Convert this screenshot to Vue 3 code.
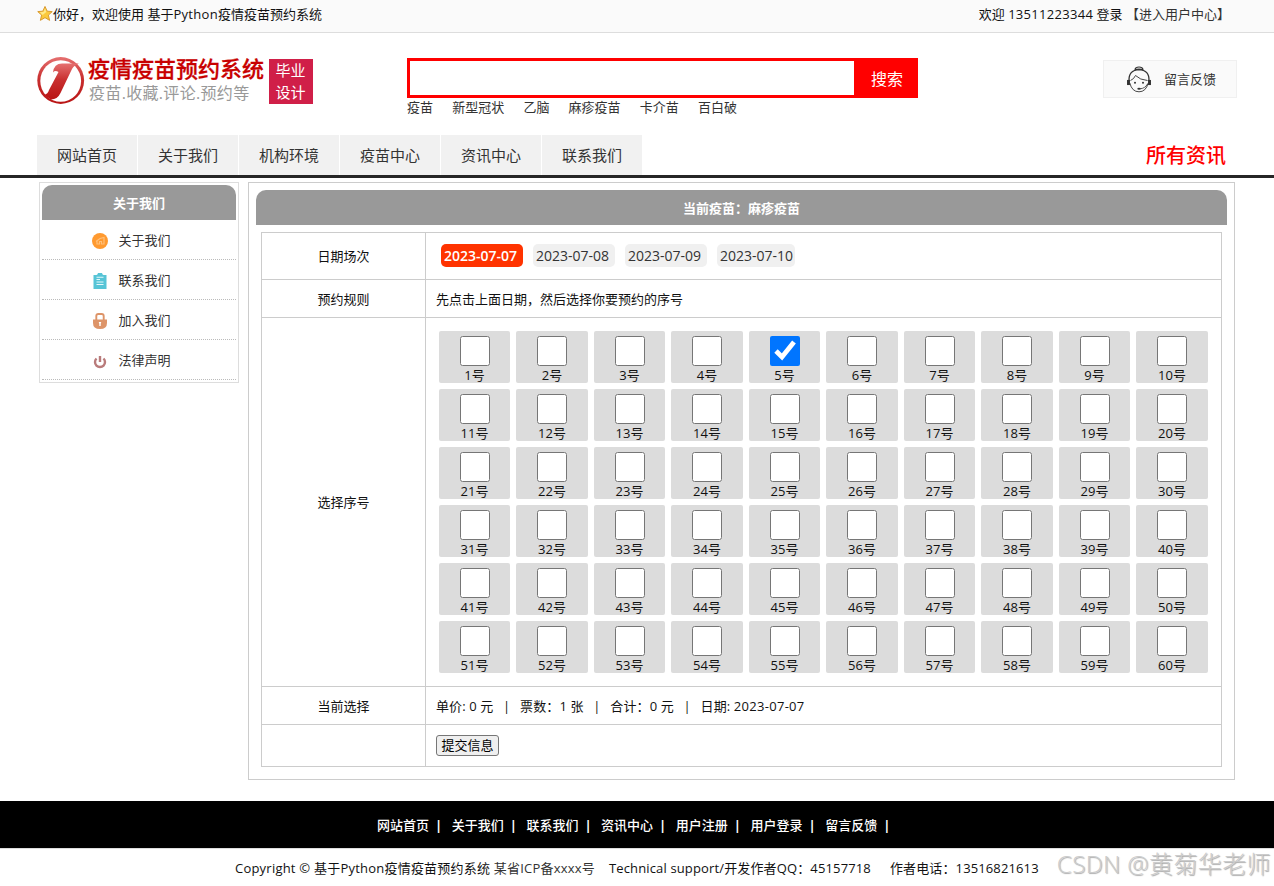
<template>
  <div class="page">
    <div class="top-bar">
      <div class="top-left">
        <svg class="star" viewBox="0 0 17 17">
          <path d="M8.5 1 L10.8 6 L16.2 6.5 L12.1 10.2 L13.4 15.8 L8.5 12.9 L3.6 15.8 L4.9 10.2 L0.8 6.5 L6.2 6 Z" fill="#fbc93c" stroke="#d6952c" stroke-width="1" stroke-linejoin="round" />
          <path d="M8.5 3 L9.9 7 L6 10 L3 7.2 L7 6.8 Z" fill="#ffe98a" />
        </svg>
        <span>你好，欢迎使用 基于<i class="num">Python</i>疫情疫苗预约系统</span>
      </div>
      <div class="top-right">欢迎 <i class="num">13511223344</i> 登录 <a href="#">【进入用户中心】</a></div>
    </div>

    <div class="header">
      <div class="logo">
        <svg class="logo-icon" viewBox="0 0 48 48">
          <defs>
            <linearGradient id="ring" x1="0" y1="0" x2="0" y2="1">
              <stop offset="0" stop-color="#e57070" />
              <stop offset="0.45" stop-color="#c93030" />
              <stop offset="1" stop-color="#b91414" />
            </linearGradient>
          </defs>
          <circle cx="23.7" cy="23.5" r="23.4" fill="url(#ring)" />
          <ellipse cx="23.7" cy="24" rx="20.4" ry="20.8" fill="#fff" />
          <path d="M16 15.5 Q17 6.5 25 6.5 L42 6.5 Q37 8 35 12 L23.5 36 Q20.5 42.5 14 42.5 L7 38 Q11 37 12 33 L21.5 15 Q18 13 16 15.5 Z" fill="url(#ring)" />
        </svg>
        <div class="logo-text">
          <div class="logo-title">疫情疫苗预约系统</div>
          <div class="logo-sub">疫苗.收藏.评论.预约等</div>
        </div>
        <div class="logo-badge">毕业<br />设计</div>
      </div>
      <div class="search">
        <div class="search-box">
          <input v-model="keyword" type="text" />
          <button>搜索</button>
        </div>
        <div class="keywords">
          <a v-for="item in keywords" :key="item" href="#">{{ item }}</a>
        </div>
      </div>
      <a class="feedback" href="#">
        <svg viewBox="0 0 24 27" fill="none" stroke="#333" stroke-width="1.1">
          <path d="M8 3.4 Q8.5 1 12 1 Q15.5 1 16 3.4 M7.5 4 Q12 2.2 16.5 4" />
          <path d="M2 15 Q1.5 4 12 3.6 Q22.5 4 22 15" stroke-width="1.3" />
          <path d="M2.8 17 Q5 25.8 12 25.8 Q19 25.8 21.2 17" stroke-width="0.9" />
          <path d="M3.5 14.5 Q7 13 8.5 9.5 Q13 14 20.5 14.5" stroke-width="0.9" />
          <path d="M20.5 18 Q18 22.5 13 22.8" stroke-width="0.8" />
          <rect x="0.6" y="14.5" width="1.8" height="4" fill="#333" />
          <rect x="21.6" y="14.5" width="1.8" height="4" fill="#333" />
          <circle cx="8" cy="16.8" r="1" fill="#333" stroke="none" />
          <circle cx="16" cy="16.8" r="1" fill="#333" stroke="none" />
          <ellipse cx="12" cy="22.8" rx="1.7" ry="1" fill="#333" stroke="none" />
        </svg>
        <span>留言反馈</span>
      </a>
    </div>

    <div class="nav">
      <a v-for="item in navs" :key="item" class="nav-item" href="#">{{ item }}</a>
      <span class="nav-news">所有资讯</span>
    </div>

    <div class="content">
      <div class="side">
        <div class="title">关于我们</div>
        <a v-for="item in sides" :key="item.name" class="side-item" href="#">
          <svg viewBox="0 0 16 16">
            <template v-if="item.icon === 'home'">
              <circle cx="8" cy="8" r="8" fill="#ff9a30" />
              <path d="M4 8.5 L8 5.5 L12 4.5 V11 H9.5 V8.5 H7.5 V11 H5 V8" fill="none" stroke="#ffc07a" stroke-width="1.2" />
            </template>
            <template v-else-if="item.icon === 'list'">
              <path d="M1.5 2 H4.5 Q5.5 2 6 0 H10 Q10.5 2 11.5 2 H14.5 V16 H1.5 Z" fill="#56c4d6" />
              <path d="M4.5 4.3 H11.5 M4.5 6.5 H8 M4.5 9 H11.5 M4.5 11.5 H11.5" stroke="#e4f8fb" stroke-width="1.1" />
            </template>
            <template v-else-if="item.icon === 'lock'">
              <path d="M4.3 8 V3 Q4.3 1 6.3 1 H9.7 Q11.7 1 11.7 3 V8" fill="none" stroke="#dd9468" stroke-width="1.9" />
              <path d="M1 6.5 H15 V10 Q15 16 8 16 Q1 16 1 10 Z" fill="#dd9468" />
              <path d="M6.7 9 H9.3 L8.7 10.8 V13 H7.3 V10.8 Z" fill="#fff" />
            </template>
            <template v-else>
              <path d="M4.5 5.5 A5 5 0 1 0 11.5 5.5" fill="none" stroke="#b97b7b" stroke-width="2.4" />
              <path d="M8 3 V9" stroke="#b97b7b" stroke-width="2.4" />
            </template>
          </svg>
          <span>{{ item.name }}</span>
        </a>
      </div>

      <div class="main">
        <div class="title">当前疫苗：麻疹疫苗</div>
        <table class="book">
          <tbody>
            <tr class="row-date">
              <td class="label">日期场次</td>
              <td>
                <div class="dates">
                  <a
                    v-for="d in dates"
                    :key="d"
                    :class="{ active: d === currentDate }"
                    href="#"
                    @click.prevent="currentDate = d"
                  >{{ d }}</a>
                </div>
              </td>
            </tr>
            <tr class="row-text">
              <td class="label">预约规则</td>
              <td>先点击上面日期，然后选择你要预约的序号</td>
            </tr>
            <tr class="row-seat">
              <td class="label">选择序号</td>
              <td>
                <div class="seats">
                  <label v-for="n in 60" :key="n" class="seat">
                    <input v-model="selected" type="checkbox" :value="n" />
                    <span>{{ n }}号</span>
                  </label>
                </div>
              </td>
            </tr>
            <tr class="row-text">
              <td class="label">当前选择</td>
              <td>
                <div class="summary">
                  <span>单价: {{ price }} 元</span><b>|</b>
                  <span>票数：{{ selected.length }} 张</span><b>|</b>
                  <span>合计：{{ price * selected.length }} 元</span><b>|</b>
                  <span>日期: <i class="num">{{ currentDate }}</i></span>
                </div>
              </td>
            </tr>
            <tr class="row-submit">
              <td class="label"></td>
              <td><button class="submit">提交信息</button></td>
            </tr>
          </tbody>
        </table>
      </div>
    </div>

    <div class="foot-nav">
      <span v-for="item in footers" :key="item"><a href="#">{{ item }}</a><b>|</b></span>
    </div>
    <div class="copyright">
      <span class="c1">Copyright © 基于Python疫情疫苗预约系统 <a href="#">某省ICP备xxxx号</a></span>
      <span class="c2">Technical support/开发作者QQ：45157718</span>
      <span class="c3">作者电话：13516821613</span>
    </div>
    <div class="watermark">CSDN @黄菊华老师</div>
  </div>
</template>

<script setup>
import { ref } from 'vue'

const keyword = ref('')
const keywords = ['疫苗', '新型冠状', '乙脑', '麻疹疫苗', '卡介苗', '百白破']
const navs = ['网站首页', '关于我们', '机构环境', '疫苗中心', '资讯中心', '联系我们']
const sides = [
  { name: '关于我们', icon: 'home' },
  { name: '联系我们', icon: 'list' },
  { name: '加入我们', icon: 'lock' },
  { name: '法律声明', icon: 'power' }
]
const dates = ['2023-07-07', '2023-07-08', '2023-07-09', '2023-07-10']
const footers = ['网站首页', '关于我们', '联系我们', '资讯中心', '用户注册', '用户登录', '留言反馈']

const currentDate = ref('2023-07-07')
const selected = ref([5])
const price = ref(0)
</script>

<style>
body {
  margin: 0;
  background: #fff;
}
</style>

<style scoped>
.page {
  position: relative;
  height: 886px;
  overflow: hidden;
  font-family: "Open Sans", "Noto Sans CJK SC", sans-serif;
  font-size: 13px;
  line-height: 20px;
  color: #111;
}

.page * {
  box-sizing: border-box;
}

a {
  color: #333;
  text-decoration: none;
}

i {
  font-style: normal;
}

.num {
  letter-spacing: 0.3px;
}

input,
button {
  font-family: inherit;
}

.top-bar {
  display: flex;
  justify-content: space-between;
  height: 33px;
  padding: 4px 44px 0 37px;
  background: #fafafa;
  border-bottom: 1px solid #ddd;
}

.top-left {
  display: flex;
}

.star {
  width: 16px;
  height: 17px;
  margin-top: 1px;
}

.header {
  display: flex;
  height: 102px;
  padding-left: 37px;
}

.logo {
  display: flex;
  width: 370px;
  padding-top: 24px;
}

.logo-icon {
  width: 48px;
  height: 48px;
}

.logo-text {
  width: 181px;
  margin-left: 3px;
  white-space: nowrap;
}

.logo-title {
  height: 24px;
  line-height: 23px;
  font-size: 22px;
  font-weight: 500;
  color: #c80000;
  -webkit-text-stroke: 0.3px #c80000;
}

.logo-sub {
  padding-left: 1px;
  line-height: 24px;
  font-size: 16px;
  letter-spacing: 0.32px;
  color: #999;
}

.logo-badge {
  width: 44px;
  height: 45px;
  margin-top: 2px;
  padding-right: 1px;
  background: #d01f48;
  color: #fff;
  font-size: 15px;
  line-height: 22px;
  text-align: center;
}

.search {
  width: 511px;
  padding-top: 25px;
}

.search-box {
  display: flex;
  height: 40px;
}

.search-box input {
  width: 447px;
  border: 3px solid #f00;
  border-right: 0;
  outline: none;
}

.search-box button {
  width: 64px;
  border: 0;
  padding: 0 0 0 2px;
  background: #f00;
  color: #fff;
  font-size: 16px;
}

.keywords {
  display: flex;
  gap: 19.2px;
  line-height: 18px;
}

.feedback {
  display: flex;
  align-items: center;
  width: 134px;
  height: 38px;
  margin: 27px 0 0 185px;
  padding-left: 23px;
  background: #fafafa;
  border: 1px solid #f0f0f0;
}

.feedback svg {
  width: 24px;
  height: 27px;
  margin-right: 13px;
}

.nav {
  display: flex;
  height: 43px;
  padding-left: 37px;
  border-bottom: 3px solid #262626;
}

.nav-item {
  width: 101px;
  border-right: 1px solid #fff;
  background: #f1f1f1;
  font-size: 15px;
  line-height: 40px;
  text-align: center;
}

.nav-news {
  margin: 0 48px 0 auto;
  color: #f00;
  font-size: 20px;
  font-weight: 500;
  line-height: 41px;
}

.content {
  display: flex;
  align-items: flex-start;
  gap: 9px;
  padding: 4px 0 0 39px;
}

.side {
  width: 200px;
  height: 201px;
  padding: 2px;
  border: 1px solid #ddd;
}

.title {
  height: 35px;
  border-radius: 10px 10px 0 0;
  background: #999;
  color: #fff;
  font-weight: bold;
  line-height: 36px;
  text-align: center;
}

.side-item {
  display: flex;
  align-items: center;
  height: 40px;
  padding: 2px 0 0 50px;
  border-bottom: 1px dotted #bbb;
}

.side-item svg {
  width: 16px;
  height: 16px;
  margin-right: 10.5px;
}

.side-item span {
  padding-bottom: 1px;
  line-height: 19px;
}

.main {
  width: 987px;
  height: 598px;
  padding: 7px;
  border: 1px solid #ccc;
}

.book {
  width: 961px;
  margin: 7px 0 0 5px;
  border-collapse: collapse;
  table-layout: fixed;
}

.book td {
  padding: 0 0 0 10px;
  border: 1px solid #ccc;
}

.book .label {
  width: 164px;
  padding: 0;
  text-align: center;
}

.row-date {
  height: 47px;
}

.row-text {
  height: 38px;
}

.row-text td {
  line-height: 18px;
}

.row-seat {
  height: 369px;
}

.row-submit {
  height: 42px;
}

.dates {
  display: flex;
  gap: 10px;
  padding: 0 0 1px 5px;
}

.dates a {
  width: 82px;
  height: 23px;
  padding-left: 3px;
  border-radius: 5px;
  background: #f0f0f0;
  font-size: 14px;
  line-height: 24px;
}

.dates a:last-child {
  width: 78px;
}

.dates a.active {
  background: #ff3300;
  color: #fff;
  font-weight: 600;
}

.seats {
  display: grid;
  grid-template-columns: repeat(10, 71.5px);
  gap: 6px;
  padding-left: 2.8px;
}

.seat {
  display: flex;
  flex-direction: column;
  align-items: center;
  height: 52px;
  padding-top: 5px;
  border-radius: 2px;
  background: #dcdcdc;
}

.seat input {
  flex-shrink: 0;
  width: 30px;
  height: 30px;
  margin: 0;
}

.seat span {
  line-height: 18px;
}

.summary {
  display: flex;
  letter-spacing: 0.1px;
}

.summary b {
  width: 26.8px;
  font-weight: normal;
  text-align: center;
}

.submit {
  display: block;
  width: 63px;
  height: 21px;
  padding: 0;
  border: 1px solid #767676;
  border-radius: 3px;
  background: #efefef;
  color: #000;
  font-size: 13px;
  line-height: 19px;
}

.foot-nav {
  display: flex;
  height: 48px;
  margin-top: 21px;
  padding-left: 377px;
  border-bottom: 1px solid #ddd;
  background: #000;
  color: #fff;
  font-weight: 500;
  line-height: 48px;
}

.foot-nav span {
  display: flex;
  width: 74.7px;
}

.foot-nav a {
  color: #fff;
}

.foot-nav b {
  margin-left: 6px;
}

.copyright {
  display: flex;
  padding-left: 235px;
  line-height: 38px;
  white-space: nowrap;
}

.c1 {
  width: 374px;
  letter-spacing: 0.22px;
}

.c2 {
  width: 281px;
  letter-spacing: 0.14px;
}

.c3 {
  letter-spacing: 0.12px;
}

.watermark {
  position: absolute;
  right: 3px;
  bottom: 4px;
  color: #ccc;
  font-size: 24px;
  font-weight: 300;
  line-height: 36px;
  letter-spacing: 0.4px;
  text-shadow: 1px 1px 1px #aaa;
  white-space: nowrap;
}
</style>
